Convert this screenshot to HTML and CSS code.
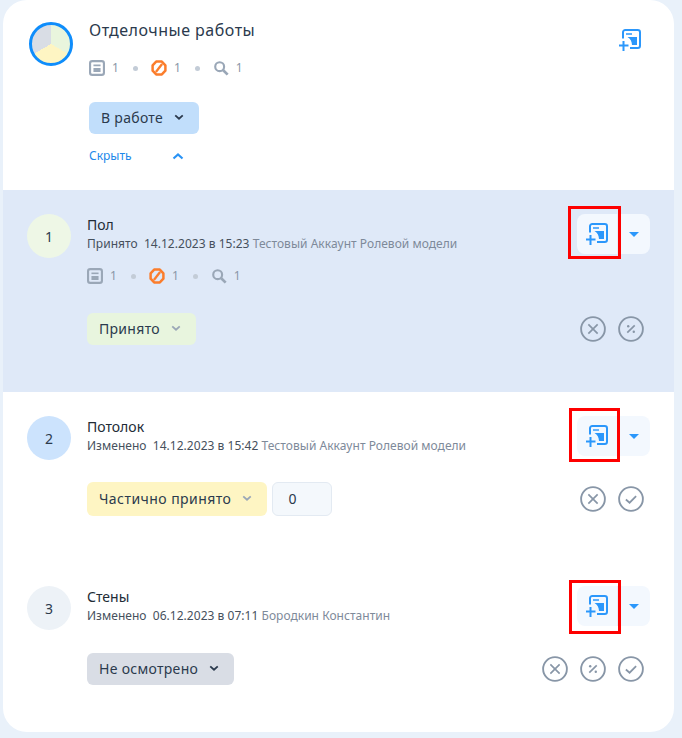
FILE: index.html
```html
<!DOCTYPE html>
<html lang="ru">
<head>
<meta charset="utf-8">
<title>Отделочные работы</title>
<link rel="stylesheet" href="styles.css">
</head>
<body>
<svg class="defs" width="0" height="0" aria-hidden="true">
  <symbol id="i-add" viewBox="0 0 22 22">
    <path d="M4 9.500V3.300A2.300 2.300 0 0 1 6.300 1h12.400A2.300 2.300 0 0 1 21 3.300v13.400a2.300 2.300 0 0 1-2.300 2.300H11" fill="none" stroke="currentColor" stroke-width="2"/>
    <path d="M7 5h6" fill="none" stroke="currentColor" stroke-width="1.400"/>
    <path d="M8.500 8H18v8h-5C12.800 12.500 11.500 9.500 8.500 8z" fill="currentColor"/>
    <path d="M4.500 12v10M0 16.500h9.500" fill="none" stroke="currentColor" stroke-width="2"/>
  </symbol>
  <symbol id="i-doc" viewBox="0 0 18 18">
    <rect x="1.200" y="1.200" width="15.600" height="15.600" rx="2.500" fill="none" stroke="currentColor" stroke-width="2.400"/>
    <path d="M5 6h8" stroke="currentColor" stroke-width="1.800"/>
    <rect x="5" y="9" width="8" height="4.500" fill="currentColor"/>
  </symbol>
  <symbol id="i-ban" viewBox="0 0 18 18">
    <path d="M5.800 1.800h6.400L16.200 6v6l-4 4.200H5.800L1.800 12V6z" fill="none" stroke="currentColor" stroke-width="2.800" stroke-linejoin="round"/>
    <path d="M12.500 4.500l-7 9" stroke="currentColor" stroke-width="2.600"/>
  </symbol>
  <symbol id="i-search" viewBox="0 0 18 18">
    <circle cx="7.500" cy="7.500" r="5" fill="none" stroke="currentColor" stroke-width="2.400"/>
    <path d="M11.500 11.500l5 5" stroke="currentColor" stroke-width="3"/>
  </symbol>
  <symbol id="i-x" viewBox="0 0 28 28">
    <circle cx="14" cy="14" r="12.800" fill="none" stroke="currentColor" stroke-width="2"/>
    <path d="M9 9l10 10M19 9L9 19" stroke="currentColor" stroke-width="1.800" fill="none"/>
  </symbol>
  <symbol id="i-pct" viewBox="0 0 28 28">
    <circle cx="14" cy="14" r="12.800" fill="none" stroke="currentColor" stroke-width="2"/>
    <path d="M18 10l-8 8" stroke="currentColor" stroke-width="1.800" fill="none"/>
    <circle cx="11" cy="11" r="1.300" fill="currentColor"/>
    <circle cx="17" cy="17" r="1.300" fill="currentColor"/>
  </symbol>
  <symbol id="i-ok" viewBox="0 0 28 28">
    <circle cx="14" cy="14" r="12.800" fill="none" stroke="currentColor" stroke-width="2"/>
    <path d="M8.500 14.500l4 3.500 7-7" stroke="currentColor" stroke-width="1.900" fill="none"/>
  </symbol>
  <symbol id="i-chev" viewBox="0 0 12 8">
    <path d="M1.500 1.500L6 5.500l4.500-4" fill="none" stroke="currentColor" stroke-width="2.200"/>
  </symbol>
</svg>

<main class="card">
  <header class="head">
    <div class="pie"></div>
    <div class="head-body">
      <h1 class="title">Отделочные работы</h1>
      <div class="stats head-stats">
        <svg class="ic c-gray"><use href="#i-doc"/></svg><span>1</span><i class="dot"></i>
        <svg class="ic c-orange"><use href="#i-ban"/></svg><span>1</span><i class="dot"></i>
        <svg class="ic c-gray"><use href="#i-search"/></svg><span>1</span>
      </div>
      <button class="status st-blue head-status">В работе<svg class="chev c-dark"><use href="#i-chev"/></svg></button>
      <a class="hide">Скрыть<svg class="chev-up"><use href="#i-chev"/></svg></a>
    </div>
    <svg class="head-add"><use href="#i-add"/></svg>
  </header>

  <section class="row row-active">
    <div class="row-top">
      <div class="num n-green">1</div>
      <div class="info">
        <div class="name">Пол</div>
        <div class="meta">Принято&nbsp; 14.12.2023 в 15:23 <span class="who">Тестовый Аккаунт Ролевой модели</span></div>
        <div class="stats row-stats">
          <svg class="ic c-gray"><use href="#i-doc"/></svg><span>1</span><i class="dot"></i>
          <svg class="ic c-orange"><use href="#i-ban"/></svg><span>1</span><i class="dot"></i>
          <svg class="ic c-gray"><use href="#i-search"/></svg><span>1</span>
        </div>
      </div>
      <div class="split">
        <div class="split-main"><svg class="add"><use href="#i-add"/></svg></div>
        <div class="split-arrow"></div>
        <div class="mark mark-1"></div>
      </div>
    </div>
    <div class="row-bottom bottom-1">
      <button class="status st-green">Принято<svg class="chev c-gray"><use href="#i-chev"/></svg></button>
      <div class="actions">
        <svg class="act"><use href="#i-x"/></svg>
        <svg class="act"><use href="#i-pct"/></svg>
      </div>
    </div>
  </section>

  <section class="row">
    <div class="row-top">
      <div class="num n-blue">2</div>
      <div class="info">
        <div class="name">Потолок</div>
        <div class="meta">Изменено&nbsp; 14.12.2023 в 15:42 <span class="who">Тестовый Аккаунт Ролевой модели</span></div>
      </div>
      <div class="split">
        <div class="split-main"><svg class="add"><use href="#i-add"/></svg></div>
        <div class="split-arrow"></div>
        <div class="mark mark-2"></div>
      </div>
    </div>
    <div class="row-bottom bottom-2">
      <button class="status st-yellow">Частично принято<svg class="chev c-gray"><use href="#i-chev"/></svg></button>
      <div class="percent">0</div>
      <div class="actions">
        <svg class="act"><use href="#i-x"/></svg>
        <svg class="act"><use href="#i-ok"/></svg>
      </div>
    </div>
  </section>

  <section class="row">
    <div class="row-top">
      <div class="num n-gray">3</div>
      <div class="info">
        <div class="name">Стены</div>
        <div class="meta">Изменено&nbsp; 06.12.2023 в 07:11 <span class="who">Бородкин Константин</span></div>
      </div>
      <div class="split">
        <div class="split-main"><svg class="add"><use href="#i-add"/></svg></div>
        <div class="split-arrow"></div>
        <div class="mark mark-3"></div>
      </div>
    </div>
    <div class="row-bottom bottom-3">
      <button class="status st-gray">Не осмотрено<svg class="chev c-dark"><use href="#i-chev"/></svg></button>
      <div class="actions">
        <svg class="act"><use href="#i-x"/></svg>
        <svg class="act"><use href="#i-pct"/></svg>
        <svg class="act"><use href="#i-ok"/></svg>
      </div>
    </div>
  </section>
</main>
</body>
</html>
```
FILE: styles.css
```css
* { box-sizing: border-box; }
html, body { margin: 0; height: 100%; }
body {
  width: 682px;
  height: 738px;
  overflow: hidden;
  background: #e9f1fa;
  font-family: "Noto Sans", "Open Sans", sans-serif;
  color: #2b3a4d;
  padding-left: 3px;
}
.defs { position: absolute; }
.card {
  width: 671px;
  height: 732px;
  background: #fff;
  border-radius: 24px;
  overflow: hidden;
}
.head {
  height: 190px;
  display: flex;
  padding: 22px 0 0 26px;
}
.pie {
  width: 44px;
  height: 44px;
  flex: none;
  border-radius: 50%;
  border: 3px solid #0f8dfb;
  background: conic-gradient(#e9f5dd 0 120deg, #fef5c3 120deg 240deg, #d9dde5 240deg 360deg);
}
.head-body { flex: 1; padding-left: 16px; }
.title {
  margin: -1px 0 0;
  font-size: 16px;
  font-weight: 400;
  line-height: 18px;
  letter-spacing: .5px;
}
.stats {
  display: flex;
  align-items: center;
  font-size: 12px;
  line-height: 16px;
  color: #8a97a8;
}
.head-stats { margin-top: 21px; }
.row-stats { margin-top: 16px; }
.ic { width: 16px; height: 16px; margin-right: 7px; flex: none; }
.c-gray { color: #9aa7b7; }
.c-orange { color: #fb7d2c; }
.c-dark { color: #2b3a4d; }
.dot {
  width: 5px;
  height: 5px;
  border-radius: 50%;
  background: #c3ccd7;
  margin: 0 13px 0 14px;
}
.status {
  display: inline-flex;
  align-items: center;
  height: 32px;
  padding: 0 15px 2px 12px;
  border: 0;
  border-radius: 6px;
  font: inherit;
  font-size: 14px;
  letter-spacing: .3px;
  color: #2b3a4d;
  white-space: nowrap;
}
.chev { width: 10px; height: 7px; margin-left: 11px; flex: none; }
.st-blue { background: #c1defb; }
.st-green { background: #e8f5de; }
.st-yellow { background: #fef5c3; height: 34px; letter-spacing: .45px; }
.st-gray { background: #d9dde5; }
.head-status { display: flex; width: 110px; padding-right: 0; margin-top: 26px; }
.hide {
  display: flex;
  align-items: center;
  margin-top: 13px;
  font-size: 12px;
  line-height: 18px;
  color: #2188ea;
}
.chev-up {
  width: 12px;
  height: 8px;
  margin-left: 40px;
  color: #2a93f5;
  transform: rotate(180deg);
}
.head-add {
  width: 22px;
  height: 22px;
  margin: 7px 33px 0 0;
  color: #2b97fb;
  flex: none;
}
.row { height: 170px; padding: 24px 24px 0 24px; }
.row-active { height: 202px; background: #dfe9f8; }
.row-top { display: flex; align-items: flex-start; position: relative; }
.num {
  width: 44px;
  height: 44px;
  flex: none;
  border-radius: 50%;
  display: flex;
  align-items: center;
  justify-content: center;
  font-size: 14px;
}
.n-green { background: #eef7e6; }
.n-blue { background: #cce3fd; }
.n-gray { background: #edf2f7; }
.info { flex: 1; padding: 1px 0 0 16px; min-width: 0; }
.name { font-size: 14px; line-height: 20px; color: #222b36; }
.meta { margin-top: 1px; font-size: 12px; line-height: 16px; letter-spacing: .03px; color: #46505d; white-space: nowrap; }
.who { color: #7e8a9a; }
.split {
  position: relative;
  display: flex;
  width: 73px;
  height: 40px;
  flex: none;
  background: #f3f8fe;
  border-radius: 8px;
}
.split-main {
  width: 41px;
  display: flex;
  align-items: center;
  justify-content: center;
  border-right: 1px solid #e6edf6;
}
.add { width: 22px; height: 22px; color: #2b97fb; }
.split-arrow {
  width: 0;
  height: 0;
  margin: 18px 0 0 11px;
  border-left: 5px solid transparent;
  border-right: 5px solid transparent;
  border-top: 5px solid #2b97fb;
}
.mark {
  position: absolute;
  border: 3px solid #fe0000;
  pointer-events: none;
}
.mark-1 { left: -9px; top: -8px; width: 53px; height: 53px; }
.mark-2 { left: -8px; top: -8px; width: 51px; height: 54px; }
.mark-3 { left: -8px; top: -6px; width: 52px; height: 54px; }
.row-bottom { display: flex; align-items: center; padding-left: 60px; }
.bottom-1 { margin-top: 29px; }
.bottom-2 { margin-top: 22px; }
.bottom-3 { margin-top: 23px; }
.percent {
  width: 60px;
  height: 34px;
  margin-left: 5px;
  padding-left: 15px;
  border: 1px solid #e3eaf2;
  border-radius: 6px;
  background: #f4f8fc;
  font-size: 14px;
  line-height: 32px;
}
.actions { margin-left: auto; display: flex; gap: 12px; padding-right: 6px; }
.act { width: 26px; height: 26px; color: #8896a7; flex: none; }
```
